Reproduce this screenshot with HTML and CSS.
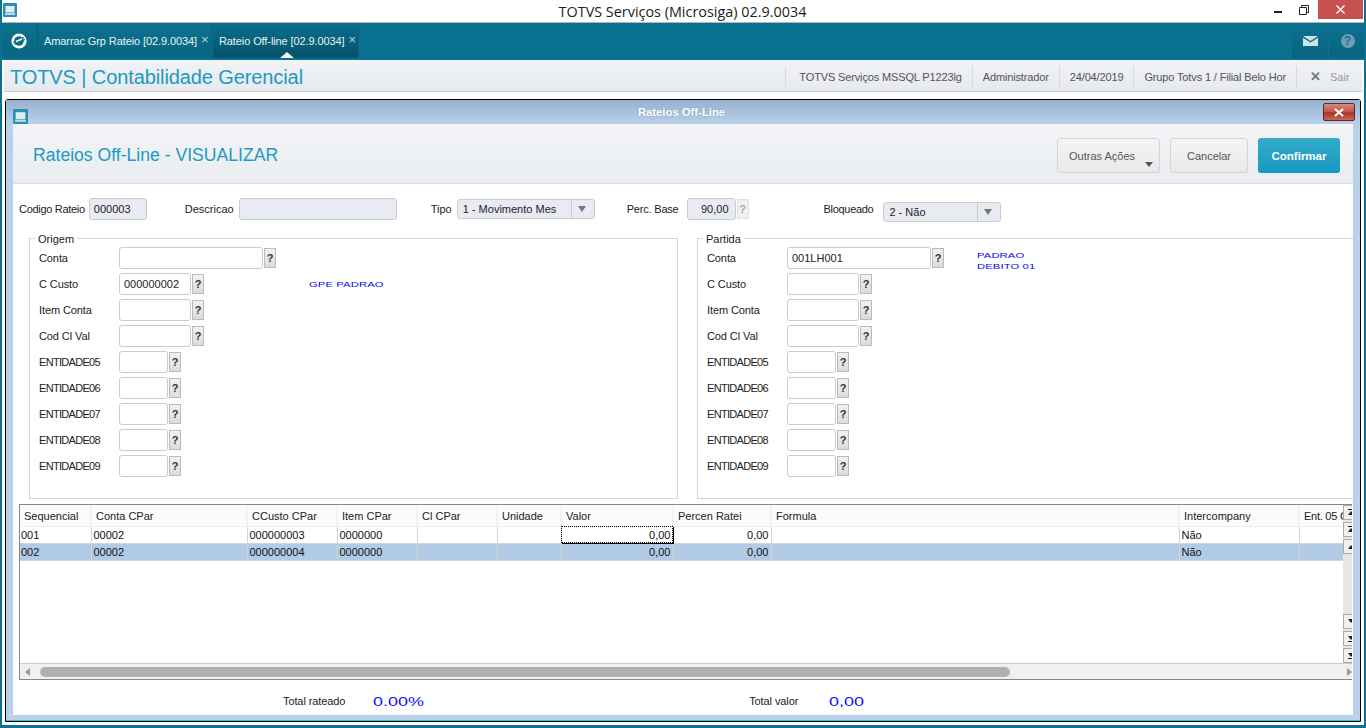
FILE: index.html
```html
<!DOCTYPE html>
<html lang="pt">
<head><meta charset="utf-8"><title>TOTVS</title><link rel="stylesheet" href="styles.css"></head>
<body>
<div class="titlebar">
  <svg class="appicon" width="14" height="14" viewBox="0 0 14 14"><rect width="14" height="14" rx="1" fill="#2a8fb5"/><rect x="2.5" y="3" width="9" height="6.5" fill="#dfeef6"/><rect x="2" y="10" width="10" height="2" fill="#bcd9e6"/></svg>
  <span class="apptitle">TOTVS Serviços (Microsiga) 02.9.0034</span>
  <div class="winctl">
    <span class="wmin"></span>
    <svg class="wmax" width="10" height="10" viewBox="0 0 10 10"><path d="M2.5 2.5V.5h7v7h-2M.5 2.5h7v7h-7z" fill="none" stroke="#222"/></svg>
    <span class="wclose"><svg width="9" height="9" viewBox="0 0 9 9"><path d="M.5.5l8 8M8.5.5l-8 8" stroke="#fff" stroke-width="1.3"/></svg></span>
  </div>
</div>
<div class="tealbar">
  <div class="logocell"><svg width="16" height="16" viewBox="0 0 16 16"><circle cx="8" cy="8" r="6.2" fill="none" stroke="#fff" stroke-width="2.8"/><path d="M2 9.5L13 4.5" stroke="#0b7190" stroke-width="1.2"/><path d="M3 11.5L14 6.5" stroke="#0b7190" stroke-width="1.2"/><path d="M5 8.5L11 6" stroke="#fff" stroke-width="1.4"/></svg></div>
  <div class="tab"><span>Amarrac Grp Rateio [02.9.0034]</span><i>×</i></div>
  <div class="tab active"><span>Rateio Off-line [02.9.0034]</span><i>×</i></div>
  <div class="tealspace"></div>
  <div class="iconcell"><svg width="15" height="10" viewBox="0 0 15 10"><path d="M0 0h15L7.5 5z" fill="#cfe3ea"/><path d="M0 1.8l7.5 4.7L15 1.8V10H0z" fill="#cfe3ea"/></svg></div>
  <div class="iconcell"><span class="help">?</span></div>
</div>
<div class="modhead">
  <div class="modtitle">TOTVS | Contabilidade Gerencial</div>
  <div class="modinfo">
    <span>TOTVS Serviços MSSQL P1223lg</span><span>Administrador</span><span>24/04/2019</span><span>Grupo Totvs 1 / Filial Belo Hor</span>
    <span class="sair"><b>✕</b>Sair</span>
  </div>
</div>
<div class="window">
  <div class="wintitle">
    <svg class="winicon" width="15" height="15" viewBox="0 0 14 14"><rect width="14" height="14" rx="1" fill="#2a8fb5"/><rect x="2.5" y="3" width="9" height="6.5" fill="#dfeef6"/><rect x="2" y="10" width="10" height="2" fill="#bcd9e6"/></svg>
    <span>Rateios Off-Line</span>
    <span class="winclose"><svg width="12" height="9" viewBox="0 0 12 9"><path d="M2 1l8 7M10 1L2 8" stroke="#fff" stroke-width="2.2"/></svg></span>
  </div>
  <div class="content">
    <div class="actionbar">
      <div class="actiontitle">Rateios Off-Line - VISUALIZAR</div>
      <div class="btn more">Outras Ações<em></em></div>
      <div class="btn">Cancelar</div>
      <div class="btn primary">Confirmar</div>
    </div>
    <div class="toprow">
      <label class="l-cod">Codigo Rateio</label><div class="inp off w58">000003</div>
      <label class="l-desc">Descricao</label><div class="inp off w158"></div>
      <label class="l-tipo">Tipo</label><div class="sel w138">1 - Movimento Mes<u></u></div>
      <label class="l-perc">Perc. Base</label><div class="inp off w49 num">90,00</div><span class="q dim">?</span>
      <label class="l-bloq">Bloqueado</label><div class="sel w118 low">2 - Não<u></u></div>
    </div>
    <div class="groups">
      <div class="group origem">
        <span class="legend">Origem</span>
        <div class="frow"><label>Conta</label><div class="inp w144"></div><span class="q">?</span></div>
        <div class="frow"><label>C Custo</label><div class="inp w72">000000002</div><span class="q">?</span><span class="bluenote gpe">GPE PADRAO</span></div>
        <div class="frow"><label>Item Conta</label><div class="inp w72"></div><span class="q">?</span></div>
        <div class="frow"><label>Cod Cl Val</label><div class="inp w72"></div><span class="q">?</span></div>
        <div class="frow"><label class="ent">ENTIDADE05</label><div class="inp w49"></div><span class="q">?</span></div>
        <div class="frow"><label class="ent">ENTIDADE06</label><div class="inp w49"></div><span class="q">?</span></div>
        <div class="frow"><label class="ent">ENTIDADE07</label><div class="inp w49"></div><span class="q">?</span></div>
        <div class="frow"><label class="ent">ENTIDADE08</label><div class="inp w49"></div><span class="q">?</span></div>
        <div class="frow"><label class="ent">ENTIDADE09</label><div class="inp w49"></div><span class="q">?</span></div>
      </div>
      <div class="group partida">
        <span class="legend">Partida</span>
        <div class="frow"><label>Conta</label><div class="inp w144">001LH001</div><span class="q">?</span><span class="bluenote pad">PADRAO<br>DEBITO 01</span></div>
        <div class="frow"><label>C Custo</label><div class="inp w72"></div><span class="q">?</span></div>
        <div class="frow"><label>Item Conta</label><div class="inp w72"></div><span class="q">?</span></div>
        <div class="frow"><label>Cod Cl Val</label><div class="inp w72"></div><span class="q">?</span></div>
        <div class="frow"><label class="ent">ENTIDADE05</label><div class="inp w49"></div><span class="q">?</span></div>
        <div class="frow"><label class="ent">ENTIDADE06</label><div class="inp w49"></div><span class="q">?</span></div>
        <div class="frow"><label class="ent">ENTIDADE07</label><div class="inp w49"></div><span class="q">?</span></div>
        <div class="frow"><label class="ent">ENTIDADE08</label><div class="inp w49"></div><span class="q">?</span></div>
        <div class="frow"><label class="ent">ENTIDADE09</label><div class="inp w49"></div><span class="q">?</span></div>
      </div>
    </div>
    <div class="gridwrap">
      <div class="gridmain">
        <div class="gridclip">
          <table class="grid">
            <colgroup><col class="c1"><col class="c2"><col class="c3"><col class="c4"><col class="c5"><col class="c6"><col class="c7"><col class="c8"><col class="c9"><col class="c10"><col class="c11"></colgroup>
            <thead><tr><th>Sequencial</th><th>Conta CPar</th><th>CCusto CPar</th><th>Item CPar</th><th>Cl CPar</th><th>Unidade</th><th>Valor</th><th>Percen Ratei</th><th>Formula</th><th>Intercompany</th><th class="cut">Ent. 05 C</th></tr></thead>
            <tbody>
              <tr><td>001</td><td>00002</td><td>000000003</td><td>0000000</td><td></td><td></td><td class="r focus">0,00</td><td class="r">0,00</td><td></td><td>Não</td><td></td></tr>
              <tr class="sel-row"><td>002</td><td>00002</td><td>000000004</td><td>0000000</td><td></td><td></td><td class="r">0,00</td><td class="r">0,00</td><td></td><td>Não</td><td></td></tr>
            </tbody>
          </table>
        </div>
        <div class="vscroll">
          <div class="sb bar"></div><div class="sb bar"></div><div class="sb"></div>
          <div class="sbspace"></div>
          <div class="sb dn"></div><div class="sb dn bar"></div><div class="sb dn bar"></div>
        </div>
      </div>
      <div class="hscroll"><span class="arrowl"></span><div class="thumb"></div><span class="arrowr"></span></div>
    </div>
    <div class="totals">
      <label class="t1">Total rateado</label><span class="bigblue b1">0.00%</span>
      <label class="t2">Total valor</label><span class="bigblue b2">0,00</span>
    </div>
  </div>
</div>
</body>
</html>
```
FILE: styles.css
```css
*{box-sizing:border-box}
html,body{margin:0;height:728px;overflow:hidden}
body{background:#fff;font-family:"Liberation Sans",Arial,sans-serif;font-size:11px;color:#222;display:flex;flex-direction:column;border-bottom:3px solid #0b7190;border-left:2px solid #0b7190;border-right:2px solid #0b7190;position:relative}
.titlebar{margin:0 -2px;height:23px;background:#fff;border-bottom:1px solid #b5b5b5;display:flex;align-items:center;position:relative;flex:none}
.appicon{margin:0 0 3px 3px}
.apptitle{flex:1;text-align:center;font-family:"Open Sans",sans-serif;font-size:14.4px;color:#222;padding-right:18px}
.winctl{position:absolute;right:3px;top:0;height:19px;display:flex;align-items:center}
.wmin{width:8px;height:2px;background:#222;margin:5px 17px 0 0}
.wmax{margin:0 9px 0 0}
.wclose{width:45px;height:19px;background:#c75050;display:flex;align-items:center;justify-content:center}
.tealbar{margin:0 -2px;height:37px;background:#0b7190;display:flex;flex:none}
.logocell{width:38px;display:flex;align-items:center;justify-content:center;border-right:1px solid #0a5f7a;background:linear-gradient(#0b7190,#086680);height:35px}
.tab{height:35px;display:flex;align-items:center;color:#e8f3f7;padding-left:6px;border-right:1px solid #0a5f7a;background:linear-gradient(#0b7190,#086680);font-size:11px;position:relative;margin-right:1px;white-space:nowrap;letter-spacing:-.1px}
.tab:nth-child(2){width:174px}
.tab.active{width:146px;background:linear-gradient(#0a6f8c,#05526a)}
.tab.active::after{content:"";position:absolute;left:67px;bottom:0;border:7px solid transparent;border-top:0;border-bottom:6px solid #eef1f5}
.tab i{font-style:normal;font-size:13px;color:#b8d3dd;margin-left:4px;margin-top:-3px}
.tealspace{flex:1}
.iconcell{width:36px;height:35px;margin-right:1px;display:flex;align-items:center;justify-content:center;background:linear-gradient(#0b7190,#08647f)}
.iconcell:last-child{margin-right:0;width:37px}
.help{width:14px;height:14px;border-radius:50%;background:#6f9fb0;color:#0b7190;font-weight:bold;font-size:12px;line-height:14px;text-align:center}
.modhead{flex:none;height:32px;margin:0 2px;background:linear-gradient(#f1f3f6,#e6e9ee);border-bottom:1px solid #c9ccd0;display:flex;align-items:center;justify-content:space-between}
.modtitle{font-size:20px;color:#1c9ac2;padding:3px 0 0 6px;letter-spacing:-.1px}
.modinfo{display:flex;align-items:center;height:22px;color:#555;font-size:11px;letter-spacing:-.14px;margin-top:2px}
.modinfo span{height:22px;line-height:22px;padding:0 10px;border-left:1px solid #d8dade}
.modinfo span:first-child{padding:0 10px 0 13px}
.modinfo .sair{color:#999;width:66px;padding:0 0 0 13px;white-space:nowrap;letter-spacing:0}
.sair b{color:#777;font-size:13px;margin-right:9px;font-weight:bold}
.window{flex:1;margin:7px 3px 3px 3px;border:1px solid #000;border-radius:3px 3px 0 0;background:#b9d1ea;box-shadow:inset 0 -1px 0 #2cc7de;padding:0 7px 6px 7px;display:flex;flex-direction:column;min-height:0}
.wintitle{flex:none;height:24px;margin:0 -7px;background:linear-gradient(#97b1cf,#b9d1ea);display:flex;align-items:center;justify-content:center;color:#fff;font-weight:bold;font-size:11.3px;position:relative;padding-right:3px}
.wintitle span:first-of-type{text-shadow:0 0 2px #7f97b3}
.winicon{position:absolute;left:7px;top:9px}
.winclose{position:absolute;right:5px;top:3px;width:32px;height:18px;border:1px solid #5e2a2a;border-radius:2px;background:linear-gradient(#d98a80,#c45245 50%,#a83224 55%,#c9695a);display:flex;align-items:center;justify-content:center}
.content{flex:1;background:#fff;min-height:0;display:flex;flex-direction:column;overflow:hidden}
.actionbar{flex:none;height:60px;background:linear-gradient(#f3f5f7,#e9ecf0);border-bottom:1px solid #d9dbde;display:flex;align-items:center;padding:4px 13px 0 20px;gap:10px}
.actiontitle{flex:1;font-size:17.6px;color:#1c9ac2}
.btn{height:35px;width:78px;border:1px solid #d3d5d8;border-radius:3px;background:linear-gradient(#f4f4f5,#e9e9ea);color:#555;display:flex;align-items:center;justify-content:center;font-size:11px;position:relative}
.btn.more{width:103px;justify-content:flex-start;padding-left:11px}
.btn.more em{position:absolute;right:6px;bottom:5px;border:4.5px solid transparent;border-bottom:0;border-top:5px solid #555}
.btn.primary{width:82px;border:0;background:linear-gradient(#37abca,#149ac0);color:#fff;font-weight:bold;font-size:11.5px}
.toprow{flex:none;display:flex;align-items:center;height:22px;margin-top:14px;padding-left:6px}
label{color:#222;white-space:nowrap;letter-spacing:-.1px}
.toprow .l-cod{letter-spacing:-.3px}
.toprow .l-desc,.toprow .l-tipo{letter-spacing:0}
.toprow .l-perc{letter-spacing:-.2px}
.toprow .l-bloq{letter-spacing:-.3px}
.inp{height:22px;border:1px solid #ccc;border-radius:3px;background:#fff;padding-left:4px;line-height:20px;color:#222;flex:none}
.inp.off{background:#e8ebf2}
.inp.num{text-align:right;padding-right:6px}
.w58{width:58px}.w158{width:158px}.w49{width:49px}.w72{width:72px}.w144{width:144px}
.l-cod{margin-right:4px}
.l-desc{margin:0 5px 0 38px}
.l-tipo{margin:0 5px 0 34px}
.l-perc{margin:0 8px 0 32px}
.l-bloq{margin:0 10px 0 75px}
.sel{height:20px;border:1px solid #ccc;border-radius:3px;background:#e8ebf2;padding-left:5px;line-height:18px;position:relative;flex:none}
.sel.low{margin-top:6px}
.w138{width:138px}.w118{width:118px}
.sel u{position:absolute;right:0;top:0;width:23px;height:18px;border-left:1px solid #ccc}
.sel u::after{content:"";position:absolute;left:6px;top:6px;border:4px solid transparent;border-bottom:0;border-top:6px solid #777}
.q{width:12px;height:20px;flex:none;border:1px solid #bbb;background:linear-gradient(#f2f2f2,#dcdcdc);color:#333;font-weight:bold;font-size:11px;line-height:18px;text-align:center}
.q.dim{color:#aaa;border-color:#e0e0e0;background:#f0f0f0;margin-left:1px}
.groups{flex:none;display:flex;margin-top:18px;gap:19px;padding-left:16px}
.group{height:261px;border:1px solid #d4d4d4;padding:6px 0 0 9px;position:relative;flex:none}
.origem{width:649px}
.partida{width:680px;border-right:0}
.legend{position:absolute;left:5px;top:-6px;background:#fff;padding:0 3px;line-height:12px}
.frow{height:26px;display:flex;align-items:center;gap:1px;position:relative}
.frow label{width:79px}
.frow label.ent{letter-spacing:-.7px}
.bluenote{position:absolute;font-size:8px;color:#0808e6;line-height:11px;transform:scaleX(1.4);transform-origin:left;white-space:nowrap;letter-spacing:.1px}
.gpe{left:270px;top:8px}
.pad{left:270px;top:5px}
.gridwrap{flex:none;width:1333px;margin:5px 0 0 6px;height:176px;border:1px solid #888;border-right:0;display:flex;flex-direction:column;position:relative}
.gridmain{flex:1;display:flex;min-height:0}
.gridclip{width:1323px;overflow:hidden;flex:none;background:#fff}
.grid{border-collapse:collapse;table-layout:fixed;width:1400px;font-size:11px}
.c1{width:71px}.c2{width:156px}.c3{width:90px}.c4{width:80px}.c5{width:80px}.c6{width:64px}.c7{width:112px}.c8{width:98px}.c9{width:408px}.c10{width:120px}.c11{width:121px}
.grid th{height:21px;padding:2px 0 0 4px;font-weight:normal;text-align:left;background:#fbfbfb;border-right:2px solid #eef3fb;border-bottom:1px solid #e8eef8;white-space:nowrap;overflow:hidden;color:#222}
.grid th.cut{letter-spacing:-.25px}
.grid td{height:17px;padding:0 1px 0 2px;border-right:1px solid #d4d4d4;border-bottom:1px solid #d4d4d4;white-space:nowrap;color:#111}
.grid td:first-child{padding-left:1px}
.grid td.r{text-align:right;padding-right:2px}
.grid td.focus{outline:1px dotted #000;outline-offset:-1px;border:1px solid #000}
.sel-row td{background:#b1cbe6}
.vscroll{flex:1;background:#e6e6e6;display:flex;flex-direction:column;gap:2px;overflow:hidden}
.sbspace{flex:1}
.sb{height:15px;width:14px;background:#f0f0f0;border:1px solid #aaa;flex:none;position:relative}
.sb::after{content:"";position:absolute;left:4px;top:5px;border:3px solid transparent;border-top:0;border-bottom:4px solid #222}
.sb.bar::before{content:"";position:absolute;left:4px;top:3px;width:6px;height:1px;background:#222}
.sb.dn::after{top:4px;border-bottom:0;border-top:4px solid #222}
.sb.dn.bar::before{top:9px}
.hscroll{height:16px;background:#f0f0f0;border-top:1px solid #ccc;display:flex;align-items:center;padding-left:5px;flex:none}
.arrowl{border:4px solid transparent;border-left:0;border-right:5px solid #999;flex:none}
.thumb{width:970px;height:10px;background:#b0b0b0;border-radius:5px;margin-left:10px}
.arrowr{margin-left:auto;border:4px solid transparent;border-right:0;border-left:5px solid #999}
.totals{flex:none;display:flex;align-items:center;height:20px;margin-top:11px;padding-left:270px}
.bigblue{color:#1010f0;font-size:13px;transform:scaleX(1.38);transform-origin:left}
.b1{margin-left:28px}
.t2{margin-left:339px}
.b2{margin-left:31px}
```
